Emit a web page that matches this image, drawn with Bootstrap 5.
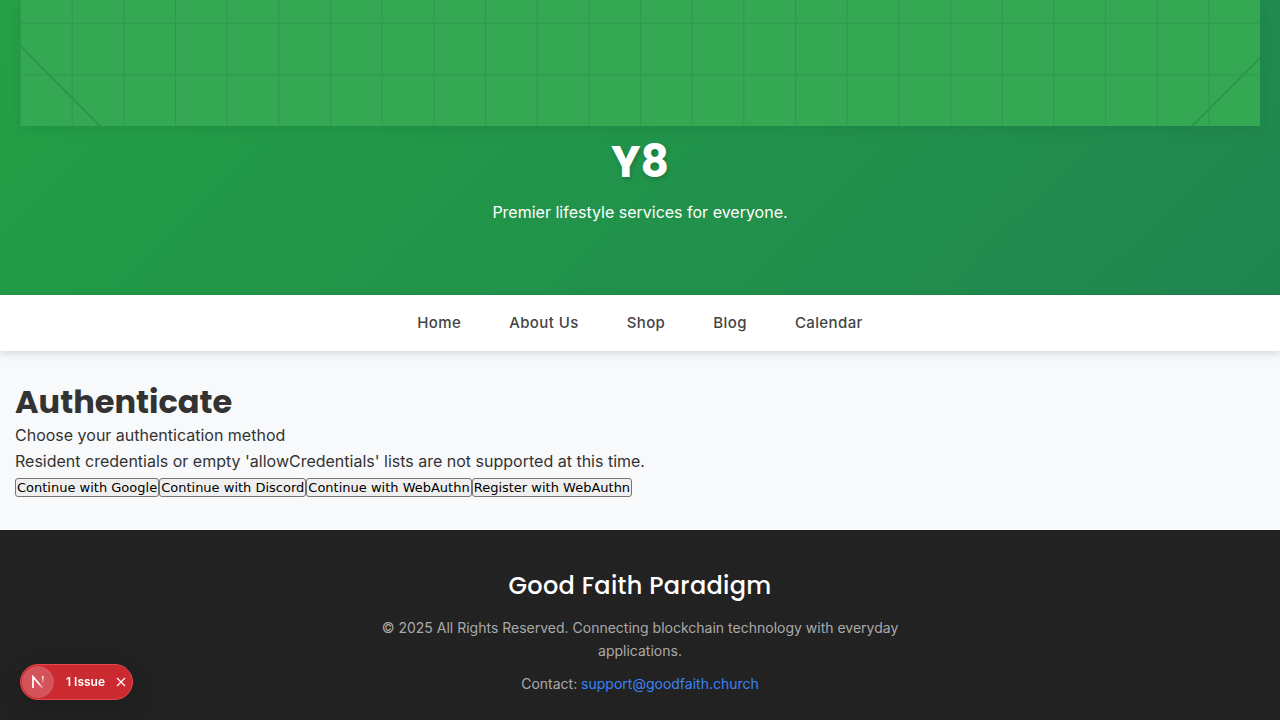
<!DOCTYPE html>
<html lang="en">
<head>
<meta charset="utf-8">
<meta name="viewport" content="width=device-width, initial-scale=1">
<title>Y8 - Authenticate</title>
<link rel="stylesheet" href="https://cdn.jsdelivr.net/npm/bootstrap@5.3.0/dist/css/bootstrap.min.css">
<style>
body { font-family: Inter, "Liberation Sans", sans-serif; font-size: 16px; line-height: 26px; color: #333; background: #f8f9fb; }
h1, h2, h3 { font-family: Poppins, Inter, sans-serif; }
.hero { background: linear-gradient(135deg, #24a244 0%, #229848 35%, #218f4c 70%, #1f8550 100%) bottom / 100% 400px; padding: 0 20px 70px; }
.hero-map { background: #35a854; box-shadow: 0 4px 12px rgba(0,0,0,.06); }
.hero-title { font-size: 44px; line-height: 54px; font-weight: 700; margin: 9px 0 10px; text-shadow: 1px 2px 4px rgba(0,0,0,.2); }
.site-nav { background: #fff; height: 56px; gap: 48px; box-shadow: 0 2px 8px rgba(0,0,0,.15); position: relative; font-size: 15px; }
.site-nav a { color: #444; font-weight: 500; letter-spacing: .4px; }
.auth { padding: 30px 15px 33px; }
.auth h2 { font-size: 32px; line-height: 41px; font-weight: 700; margin: 0; }
.auth button { font: 13px/17px "DejaVu Sans", sans-serif; color: #000; background: #efefef; border: 1px solid #767676; border-radius: 3px; padding: 0 1px; }
.site-footer { background: #222; color: #aaa; padding: 40px 16px 24px; font-size: 14px; line-height: 23px; }
.site-footer h3 { color: #fff; font-size: 24px; line-height: 31px; font-weight: 500; letter-spacing: .3px; margin-bottom: 15px; }
.site-footer p { max-width: 600px; margin: 0 auto 10px; }
.site-footer a { color: #3b82f6; }
.issue-pill { left: 20px; bottom: 20px; height: 36px; padding: 0 6px 0 1px; border: 1px solid #e5484d; border-radius: 18px; background: #ca2a30; color: #fff; font-size: 12px; line-height: 18px; box-shadow: 0 8px 24px rgba(0,0,0,.2); }
.issue-pill button { background: none; border: 0; color: inherit; padding: 0; font-weight: 600; line-height: 18px; }
.issue-pill .logo-btn { width: 32px; height: 32px; border-radius: 50%; background: #d5535a; margin-right: 12px; }
.issue-pill .close-btn { margin-left: 11px; }
</style>
<script src="https://cdn.jsdelivr.net/npm/bootstrap@5.3.0/dist/js/bootstrap.bundle.min.js"></script>
</head>
<body class="min-vh-100 d-flex flex-column">
<header class="hero text-center text-white">
  <svg class="hero-map d-block w-100" viewBox="0 0 1200 122" aria-hidden="true">
    <defs><pattern id="grid" y="22" width="50" height="50" patternUnits="userSpaceOnUse"><path d="M50 0H0V50" fill="none" stroke="#2f994c" stroke-width="2"/></pattern></defs>
    <rect width="1200" height="121.500" fill="url(#grid)"/>
    <path d="M0 44 77 122M1200 56 1134 122" fill="none" stroke="#2d974a" stroke-width="2"/>
  </svg>
  <h1 class="hero-title">Y8</h1>
  <p class="mb-0">Premier lifestyle services for everyone.</p>
</header>
<nav class="site-nav d-flex justify-content-center align-items-center" aria-label="Main">
  <a class="text-decoration-none" href="#">Home</a>
  <a class="text-decoration-none" href="#">About Us</a>
  <a class="text-decoration-none" href="#">Shop</a>
  <a class="text-decoration-none" href="#">Blog</a>
  <a class="text-decoration-none" href="#">Calendar</a>
</nav>
<main class="auth">
  <h2>Authenticate</h2>
  <p class="mb-0">Choose your authentication method</p>
  <p class="mb-0">Resident credentials or empty 'allowCredentials' lists are not supported at this time.</p>
  <div class="d-flex flex-wrap pt-1"><button type="button">Continue with Google</button><button type="button">Continue with Discord</button><button type="button">Continue with WebAuthn</button><button type="button">Register with WebAuthn</button></div>
</main>
<footer class="site-footer text-center flex-grow-1">
  <h3>Good Faith Paradigm</h3>
  <p>© 2025 All Rights Reserved. Connecting blockchain technology with everyday applications.</p>
  <p class="mb-0">Contact: <a class="text-decoration-none" href="mailto:support@goodfaith.church">support@goodfaith.church</a></p>
</footer>
<div class="issue-pill position-fixed d-flex align-items-center">
  <button type="button" class="logo-btn d-flex align-items-center justify-content-center" aria-label="Open dev tools">
    <svg width="14" height="14" viewBox="0 0 14 14" fill="none" aria-hidden="true">
      <defs><linearGradient id="fadeA" x1="8" y1="8" x2="12" y2="13" gradientUnits="userSpaceOnUse"><stop stop-color="#fff"/><stop offset="1" stop-color="#fff" stop-opacity="0.200"/></linearGradient>
      <linearGradient id="fadeB" x1="11" y1="1" x2="11" y2="9" gradientUnits="userSpaceOnUse"><stop stop-color="#fff"/><stop offset="1" stop-color="#fff" stop-opacity="0"/></linearGradient></defs>
      <path d="M2 13V1.700L11.500 13" stroke="url(#fadeA)" stroke-width="1.700"/><path d="M11 1H12.500V9H11Z" fill="url(#fadeB)"/>
    </svg>
  </button>
  <button type="button" class="text-nowrap">1 Issue</button>
  <button type="button" class="close-btn d-flex" aria-label="Close">
    <svg width="10" height="10" viewBox="0 0 10 10" aria-hidden="true"><path d="M1 1 9 9M9 1 1 9" stroke="#fff" stroke-width="1.200"/></svg>
  </button>
</div>
</body>
</html>
